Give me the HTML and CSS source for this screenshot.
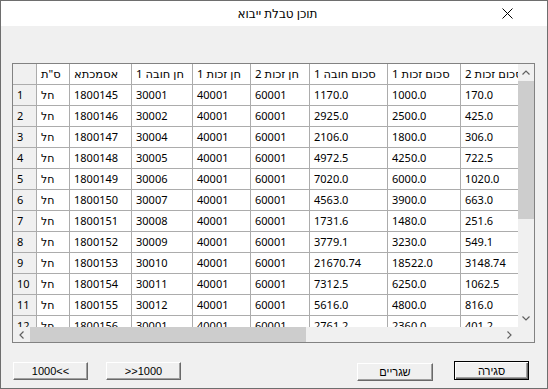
FILE: index.html
```html
<!DOCTYPE html>
<html>
<head>
    <title>תוכן טבלת ייבוא</title>
    <link rel="stylesheet" href="styles.css">
</head>
<body>
<div class="window">
    <div class="titlebar">
        <span class="title">תוכן טבלת ייבוא</span>
        <span class="close">
            <svg width="11" height="11" viewBox="0 0 11 11"><path d="M0.5 0.5 L10.5 10.5 M10.5 0.5 L0.5 10.5" stroke="#000" stroke-width="1" fill="none"/></svg>
        </span>
    </div>

    <div class="body">
        <div class="grid">
            <div class="grid-main">
                <div class="viewport">
                    <table>
                        <colgroup>
                            <col style="width:24px"><col style="width:33px"><col style="width:62px">
                            <col style="width:61px"><col style="width:58px"><col style="width:59px">
                            <col style="width:78px"><col style="width:73px"><col style="width:90px">
                        </colgroup>
                        <thead>
                        <tr>
                            <th class="rowhead"></th>
                            <th dir="rtl">ס"ת</th>
                            <th dir="rtl">אסמכתא</th>
                            <th dir="rtl">חן חובה 1</th>
                            <th dir="rtl">חן זכות 1</th>
                            <th dir="rtl">חן זכות 2</th>
                            <th dir="rtl">סכום חובה 1</th>
                            <th dir="rtl">סכום זכות 1</th>
                            <th dir="rtl">סכום זכות 2</th>
                        </tr>
                        </thead>
                        <tbody>
                        <tr><td class="rowhead">1</td><td>חל</td><td>1800145</td><td>30001</td><td>40001</td><td>60001</td><td>1170.0</td><td>1000.0</td><td>170.0</td></tr>
                        <tr><td class="rowhead">2</td><td>חל</td><td>1800146</td><td>30002</td><td>40001</td><td>60001</td><td>2925.0</td><td>2500.0</td><td>425.0</td></tr>
                        <tr><td class="rowhead">3</td><td>חל</td><td>1800147</td><td>30004</td><td>40001</td><td>60001</td><td>2106.0</td><td>1800.0</td><td>306.0</td></tr>
                        <tr><td class="rowhead">4</td><td>חל</td><td>1800148</td><td>30005</td><td>40001</td><td>60001</td><td>4972.5</td><td>4250.0</td><td>722.5</td></tr>
                        <tr><td class="rowhead">5</td><td>חל</td><td>1800149</td><td>30006</td><td>40001</td><td>60001</td><td>7020.0</td><td>6000.0</td><td>1020.0</td></tr>
                        <tr><td class="rowhead">6</td><td>חל</td><td>1800150</td><td>30007</td><td>40001</td><td>60001</td><td>4563.0</td><td>3900.0</td><td>663.0</td></tr>
                        <tr><td class="rowhead">7</td><td>חל</td><td>1800151</td><td>30008</td><td>40001</td><td>60001</td><td>1731.6</td><td>1480.0</td><td>251.6</td></tr>
                        <tr><td class="rowhead">8</td><td>חל</td><td>1800152</td><td>30009</td><td>40001</td><td>60001</td><td>3779.1</td><td>3230.0</td><td>549.1</td></tr>
                        <tr><td class="rowhead">9</td><td>חל</td><td>1800153</td><td>30010</td><td>40001</td><td>60001</td><td>21670.74</td><td>18522.0</td><td>3148.74</td></tr>
                        <tr><td class="rowhead">10</td><td>חל</td><td>1800154</td><td>30011</td><td>40001</td><td>60001</td><td>7312.5</td><td>6250.0</td><td>1062.5</td></tr>
                        <tr><td class="rowhead">11</td><td>חל</td><td>1800155</td><td>30012</td><td>40001</td><td>60001</td><td>5616.0</td><td>4800.0</td><td>816.0</td></tr>
                        <tr><td class="rowhead">12</td><td>חל</td><td>1800156</td><td>30001</td><td>40001</td><td>60001</td><td>2761.2</td><td>2360.0</td><td>401.2</td></tr>
                        </tbody>
                    </table>
                </div>
                <div class="vscroll">
                    <span class="arrow"><svg width="8" height="5" viewBox="0 0 8 5"><path d="M0.5 4.5 L4 1 L7.5 4.5" stroke="#606060" stroke-width="1.2" fill="none"/></svg></span>
                    <span class="vthumb"></span>
                    <span class="fill"></span>
                    <span class="arrow"><svg width="8" height="5" viewBox="0 0 8 5"><path d="M0.5 0.5 L4 4 L7.5 0.5" stroke="#606060" stroke-width="1.2" fill="none"/></svg></span>
                </div>
            </div>
            <div class="grid-bottom">
                <div class="hscroll">
                    <span class="arrow"><svg width="5" height="8" viewBox="0 0 5 8"><path d="M4.5 0.5 L1 4 L4.5 7.5" stroke="#606060" stroke-width="1.2" fill="none"/></svg></span>
                    <span class="hthumb"></span>
                    <span class="fill"></span>
                    <span class="arrow"><svg width="5" height="8" viewBox="0 0 5 8"><path d="M0.5 0.5 L4 4 L0.5 7.5" stroke="#606060" stroke-width="1.2" fill="none"/></svg></span>
                </div>
                <div class="corner"></div>
            </div>
        </div>

        <div class="buttons">
            <div class="group">
                <button class="btn">1000&lt;&lt;</button>
                <button class="btn">&gt;&gt;1000</button>
            </div>
            <div class="group right">
                <button class="btn low">שגריים</button>
                <button class="btn default">סגירה</button>
            </div>
        </div>
    </div>
</div>
</body>
</html>
```

FILE: styles.css
```css
body { margin: 0; }
.window {
    width: 548px;
    height: 389px;
    box-sizing: border-box;
    border: 1px solid #6e6e6e;
    background: #f0f0f0;
    display: flex;
    flex-direction: column;
}
.titlebar {
    height: 25px;
    background: #fff;
    display: flex;
    align-items: center;
    padding: 0 23px 0 64px;
    font: 12px "Noto Sans", "DejaVu Sans", sans-serif;
    color: #000;
}
.title { flex: 1; text-align: center; }
.close { width: 34px; display: flex; justify-content: center; }

.body { flex: 1; padding: 37px 12px 0 11px; }

.grid {
    width: 523px;
    height: 280px;
    box-sizing: border-box;
    border: 1px solid #828282;
    background: #fff;
    display: flex;
    flex-direction: column;
}
.grid-main { display: flex; height: 263px; }
.viewport { width: 505px; overflow: hidden; }
.vscroll {
    width: 16px;
    background: #f0f0f0;
    display: flex;
    flex-direction: column;
}
.vscroll .arrow { height: 17px; display: flex; align-items: center; justify-content: center; }
.vthumb { height: 138px; background: #cdcdcd; }
.fill { flex: 1; }

.grid-bottom { display: flex; height: 15px; }
.hscroll { width: 505px; display: flex; background: #f0f0f0; }
.hscroll .arrow { width: 17px; display: flex; align-items: center; justify-content: center; }
.hthumb { width: 276px; background: #cdcdcd; }
.corner { width: 16px; background: #f0f0f0; }

table {
    border-collapse: separate;
    border-spacing: 0;
    table-layout: fixed;
    width: 538px;
    font: 11px "Noto Sans", "DejaVu Sans", sans-serif;
    color: #000;
}
th, td {
    height: 21px;
    box-sizing: border-box;
    padding: 0 4px;
    line-height: 20px;
    border-right: 1px solid #acacac;
    border-bottom: 1px solid #acacac;
    text-align: left;
    white-space: nowrap;
    overflow: hidden;
    font-weight: normal;
}
th { background: #fff; font-size: 11.5px; }
.rowhead { background: #f0f0f0; }

.buttons {
    display: flex;
    justify-content: space-between;
    align-items: flex-start;
    margin-top: 18px;
    padding: 0 6px 0 1px;
}
.group { display: flex; align-items: flex-start; gap: 18px; }
.group.right { gap: 21px; }
.btn {
    width: 75px;
    height: 18px;
    margin-top: 1px;
    box-sizing: border-box;
    padding: 0;
    font: 11px "Liberation Sans", "DejaVu Sans", sans-serif;
    color: #000;
    background: #f0f0f0;
    border: 1px solid;
    border-color: #fff #696969 #696969 #fff;
    box-shadow: inset -1px -1px #a0a0a0;
}
.btn.low { width: 76px; margin-top: 2px; }
.btn.default {
    height: 19px;
    margin-top: 0;
    border: 1px solid #000;
    box-shadow: inset 1px 1px #fff, inset -1px -1px #696969, inset -2px -2px #a0a0a0;
}
```
